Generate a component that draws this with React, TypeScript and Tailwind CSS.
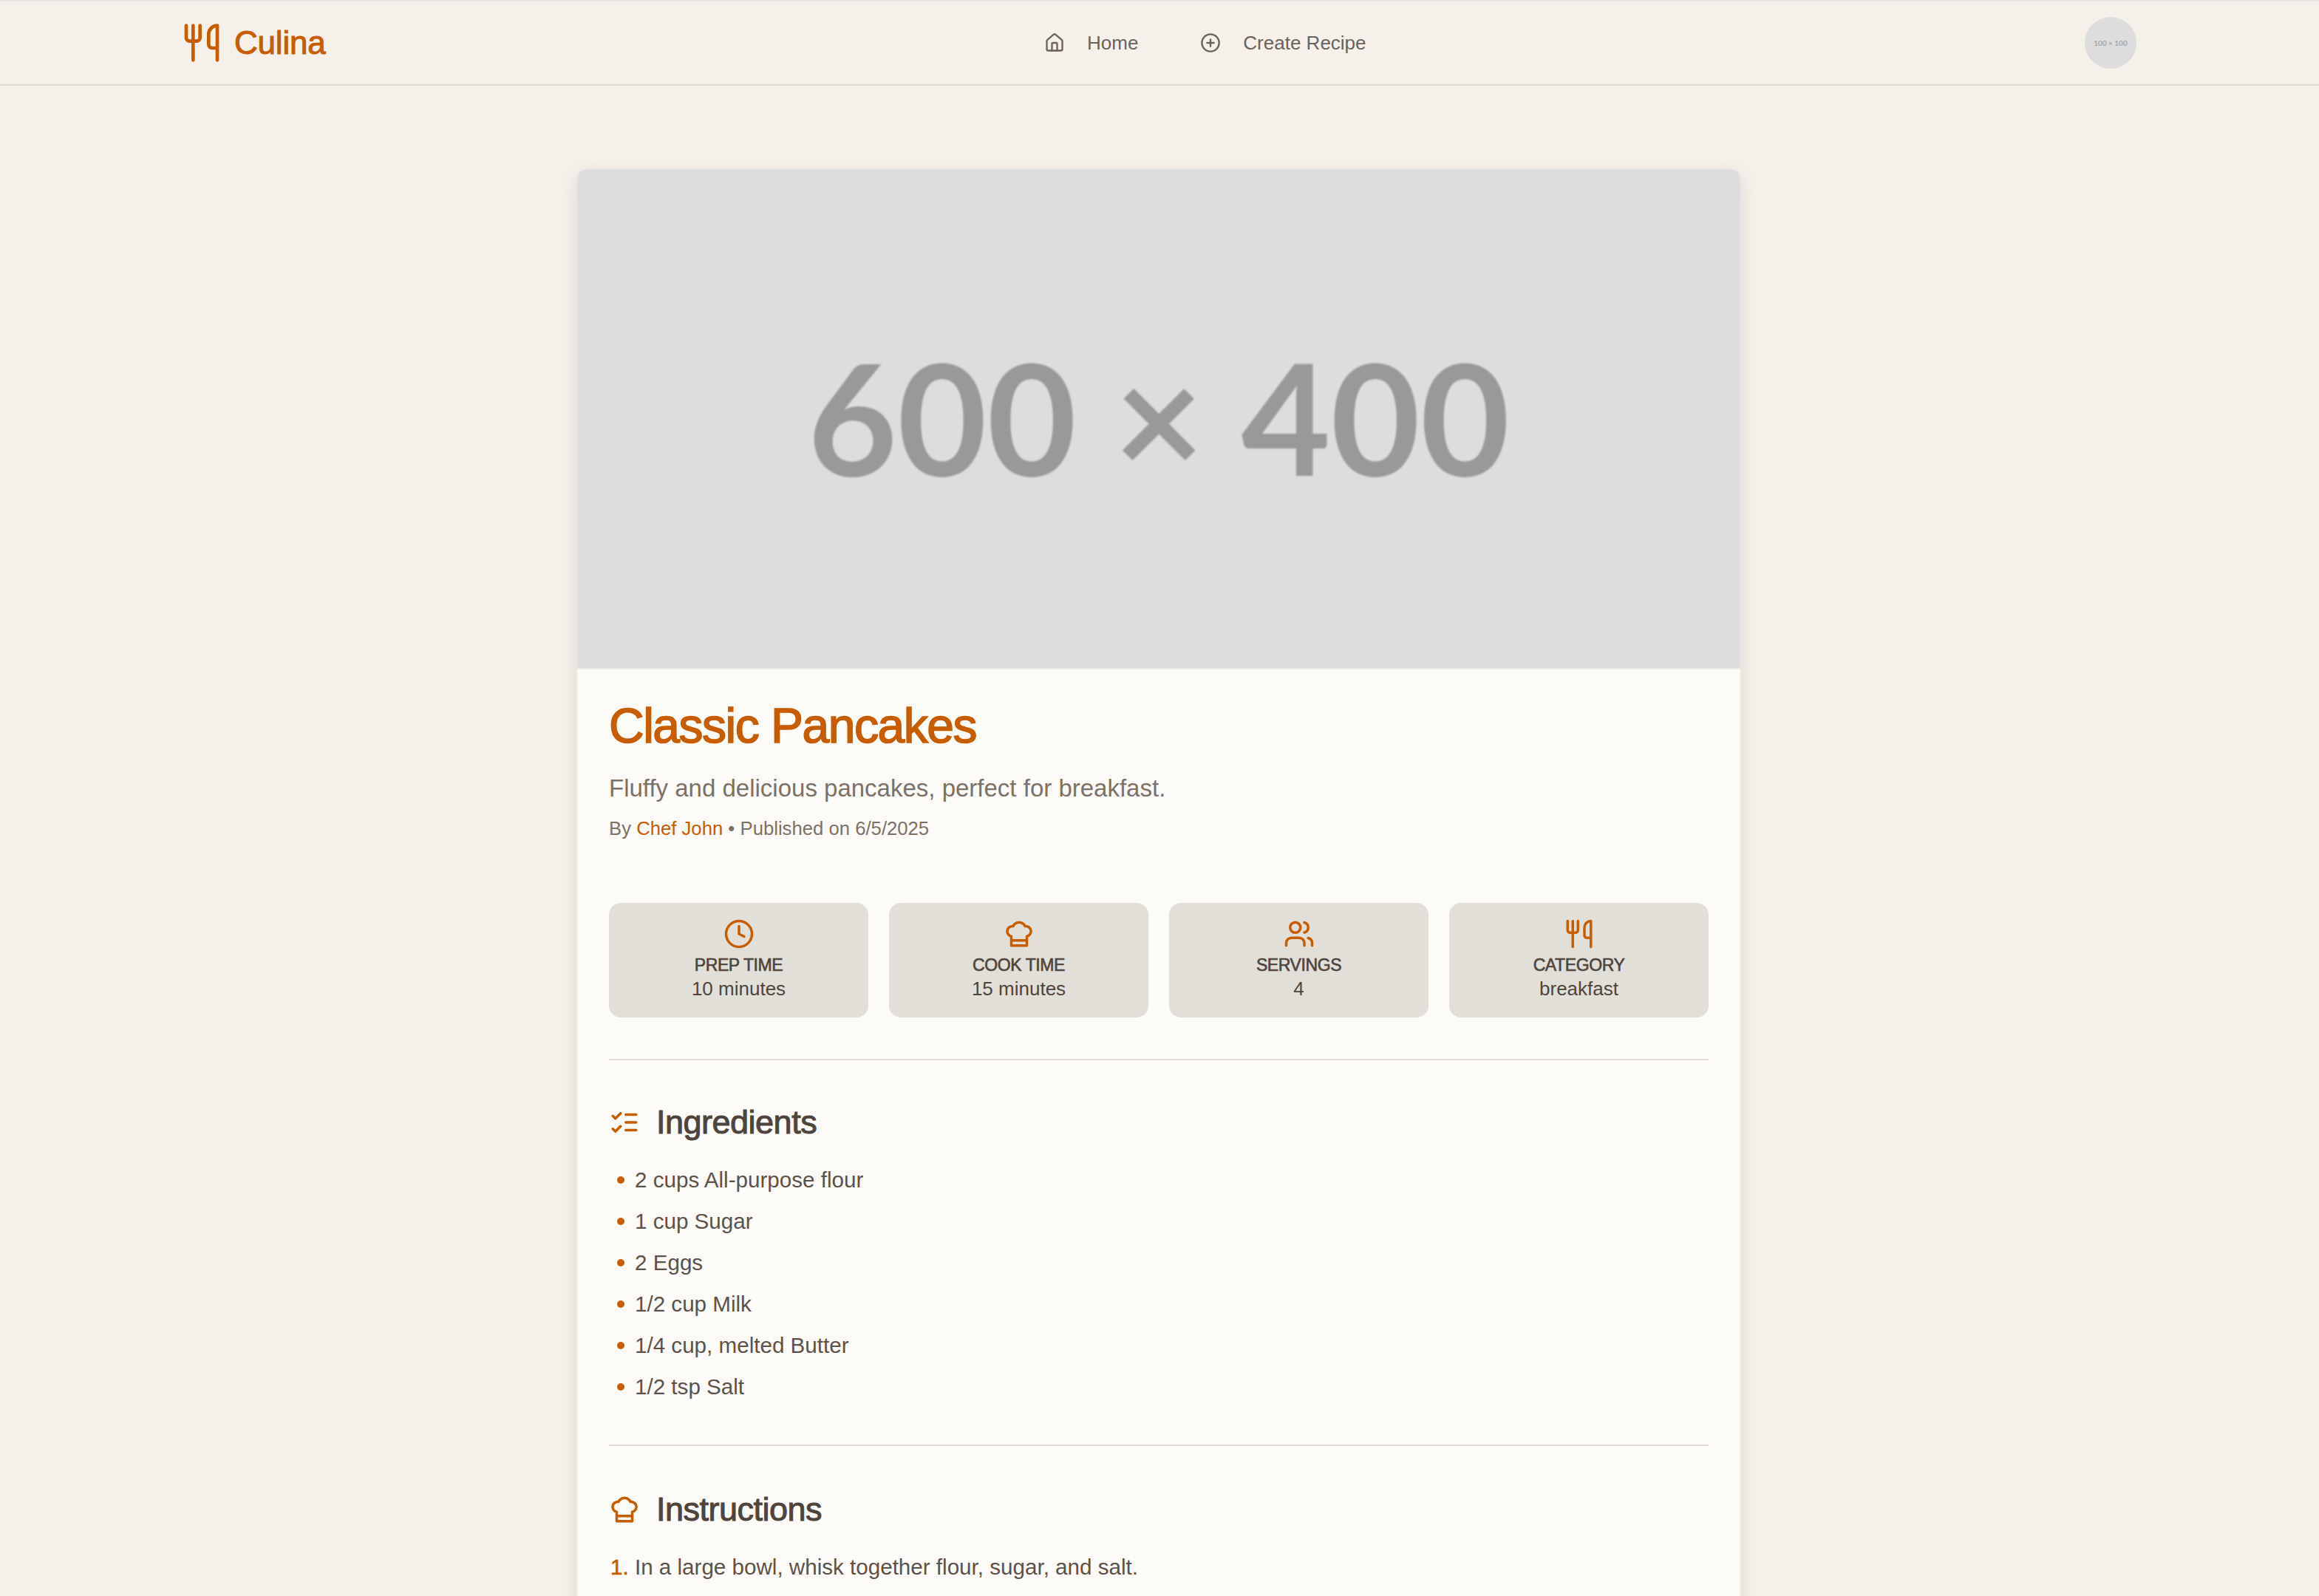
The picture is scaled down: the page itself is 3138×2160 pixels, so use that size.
import { CirclePlus, Clock, House, Users, Utensils } from 'lucide-react';
import type { ComponentType } from 'react';

type IconProps = { size?: number; className?: string };

// older lucide shapes, the current package draws these two differently
function ChefHatIcon({ size = 24, className }: IconProps) {
  return (
    <svg width={size} height={size} viewBox="0 0 24 24" fill="none" stroke="currentColor" strokeWidth="2" strokeLinecap="round" strokeLinejoin="round" className={className}>
      <path d="M6 13.87A4 4 0 0 1 7.41 6a5.11 5.11 0 0 1 1.05-1.54 5 5 0 0 1 7.08 0A5.11 5.11 0 0 1 16.59 6 4 4 0 0 1 18 13.87V21H6Z" />
      <line x1="6" y1="17" x2="18" y2="17" />
    </svg>
  );
}

function ListChecksIcon({ size = 24, className }: IconProps) {
  return (
    <svg width={size} height={size} viewBox="0 0 24 24" fill="none" stroke="currentColor" strokeWidth="2" strokeLinecap="round" strokeLinejoin="round" className={className}>
      <path d="m3 17 2 2 4-4" />
      <path d="m3 7 2 2 4-4" />
      <path d="M13 6h8" />
      <path d="M13 12h8" />
      <path d="M13 18h8" />
    </svg>
  );
}

const stats: { icon: ComponentType<IconProps>; label: string; value: string }[] = [
  { icon: Clock, label: 'PREP TIME', value: '10 minutes' },
  { icon: ChefHatIcon, label: 'COOK TIME', value: '15 minutes' },
  { icon: Users, label: 'SERVINGS', value: '4' },
  { icon: Utensils, label: 'CATEGORY', value: 'breakfast' },
];

const ingredients = [
  '2 cups All-purpose flour',
  '1 cup Sugar',
  '2 Eggs',
  '1/2 cup Milk',
  '1/4 cup, melted Butter',
  '1/2 tsp Salt',
];

function NavBar() {
  return (
    <header className="h-[116px] border-t-2 border-b-2 border-t-[#e4e4e0] border-b-[#e0dcd5] pl-[245px] pr-[247px] flex items-center justify-between">
      <div className="flex items-center gap-[16px] text-[#c75c00]">
        <Utensils size={56} />
        <span className="text-[44px] tracking-[-0.2px] [-webkit-text-stroke:1px_#c75c00]">Culina</span>
      </div>
      <nav className="flex items-center gap-[84px] text-[26px] text-[#6b625a]">
        <a className="flex items-center gap-[30px]">
          <House size={28} />
          Home
        </a>
        <a className="flex items-center gap-[30px]">
          <CirclePlus size={28} />
          Create Recipe
        </a>
      </nav>
      <div className="w-[70px] h-[70px] rounded-full bg-[#dddddd] flex items-center justify-center font-['Lato',sans-serif] font-bold text-[10px] text-[#a5a5a5]">
        100 × 100
      </div>
    </header>
  );
}

export default function App() {
  return (
    <div className="h-[2160px] overflow-hidden bg-[#f5f0ea] font-['Liberation_Sans',Arial,sans-serif]">
      <NavBar />
      <main className="pt-[112px] pr-[2px] flex justify-center">
        <article className="w-[1576px] rounded-[16px] overflow-hidden bg-[#fcfbf7] shadow-[0_8px_24px_rgba(80,60,40,0.12)]">
          <div className="h-[677px] pb-[6px] bg-[#dddddd] flex items-center justify-center font-['Lato',sans-serif] font-bold text-[209px] text-[#999999] blur-[1px]">
            600 × 400
          </div>
          <div className="border-x-2 border-[#f0ede6] px-[42px] pt-[39px] pb-[300px]">
            <h1 className="text-[66px] leading-[76px] tracking-[-1.5px] text-[#c75c00] [-webkit-text-stroke:1.6px_#c75c00]">
              Classic Pancakes
            </h1>
            <p className="mt-[25px] text-[33px] leading-[44px] text-[#7c7167]">
              Fluffy and delicious pancakes, perfect for breakfast.
            </p>
            <p className="mt-[12px] text-[25.7px] leading-[40px] text-[#7c7167]">
              By <span className="text-[#c75c00]">Chef John</span> • Published on 6/5/2025
            </p>

            <div className="mt-[81px] grid grid-cols-4 gap-[28px]">
              {stats.map(({ icon: Icon, label, value }) => (
                <div key={label} className="h-[155px] rounded-[16px] bg-[#e2dfd8] flex flex-col items-center pt-[21px] text-[#4e443c]">
                  <Icon size={42} className="text-[#c75c00]" />
                  <div className="mt-[5px] text-[23px] leading-[32px] tracking-[-0.4px] [-webkit-text-stroke:0.6px_#4e443c]">{label}</div>
                  <div className="text-[26px] leading-[32px]">{value}</div>
                </div>
              ))}
            </div>

            <hr className="mt-[56px] border-t-2 border-[#e0dcd5]" />

            <h2 className="mt-[54px] flex items-center gap-[22px] text-[45px] leading-[60px] tracking-[-0.5px] text-[#4e443c] [-webkit-text-stroke:1px_#4e443c]">
              <ListChecksIcon size={42} className="text-[#c75c00]" />
              Ingredients
            </h2>
            <ul className="mt-[20px] flex flex-col text-[29.6px] text-[#5c5249]">
              {ingredients.map((item) => (
                <li key={item} className="h-[56px] flex items-center">
                  <span className="ml-[11px] mr-[14px] w-[10px] h-[10px] rounded-full bg-[#c75c00]" />
                  {item}
                </li>
              ))}
            </ul>

            <hr className="mt-[50px] border-t-2 border-[#e0dcd5]" />

            <h2 className="mt-[56px] flex items-center gap-[22px] text-[45px] leading-[60px] tracking-[-0.5px] text-[#4e443c] [-webkit-text-stroke:1px_#4e443c]">
              <ChefHatIcon size={42} className="text-[#c75c00]" />
              Instructions
            </h2>
            <p className="mt-[24px] pl-[2px] text-[29.6px] leading-[48px] text-[#5c5249]">
              <span className="text-[#c75c00] [-webkit-text-stroke:0.6px_#c75c00]">1.</span> In a large bowl, whisk together flour, sugar, and salt.
            </p>
          </div>
        </article>
      </main>
    </div>
  );
}
